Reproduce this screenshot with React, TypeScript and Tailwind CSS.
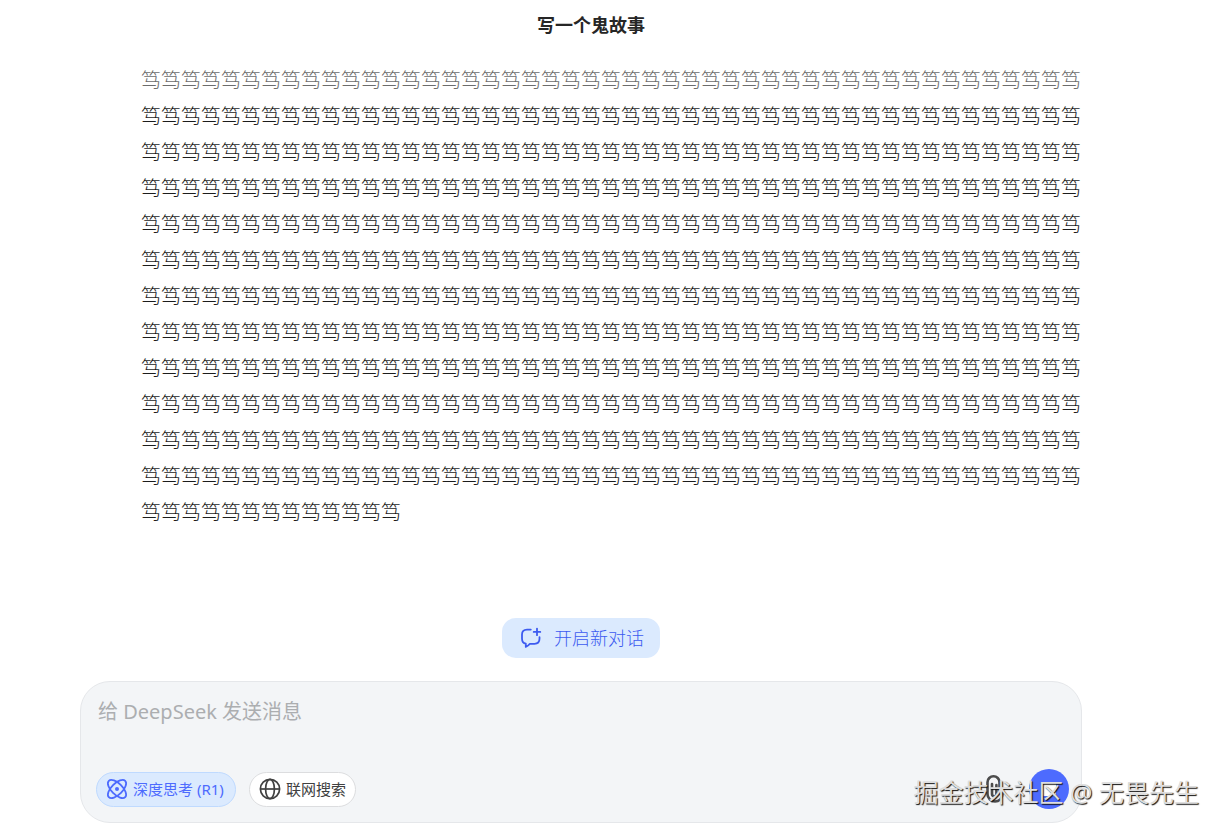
import React from "react";

const STORY = "笃".repeat(47 * 12 + 13);

function NewChatIcon() {
  return (
    <svg viewBox="0 0 22 22" className="h-[22px] w-[22px]" fill="none" stroke="currentColor" strokeWidth="1.8" strokeLinecap="round" strokeLinejoin="round" aria-hidden="true">
      <path d="M10.8 2.6H7Q2 2.6 2 7.6v3.9q0 4.6 3.8 5.1v3.3q2.2-.6 4.1-3.1h4.6q5 0 5-5v-1.6" />
      <path d="M17 1.6v6.6M13.7 4.9h6.6" />
    </svg>
  );
}

function AtomIcon() {
  return (
    <svg viewBox="0 0 22 22" className="h-[22px] w-[22px]" fill="none" stroke="currentColor" strokeWidth="1.8" aria-hidden="true">
      <ellipse cx="11" cy="11" rx="11.6" ry="5.6" transform="rotate(45 11 11)" />
      <ellipse cx="11" cy="11" rx="11.6" ry="5.6" transform="rotate(-45 11 11)" />
      <circle cx="11" cy="11" r="2" fill="currentColor" stroke="none" />
    </svg>
  );
}

function GlobeIcon() {
  return (
    <svg viewBox="0 0 22 22" className="h-[22px] w-[22px]" fill="none" stroke="currentColor" strokeWidth="1.7" aria-hidden="true">
      <circle cx="11" cy="11" r="9.6" />
      <ellipse cx="11" cy="11" rx="4.4" ry="9.6" />
      <path d="M1.4 11h19.2" />
    </svg>
  );
}

function ClipIcon() {
  return (
    <svg viewBox="0 0 24 30" className="h-[30px] w-6" fill="none" stroke="currentColor" strokeWidth="2.6" strokeLinecap="round" aria-hidden="true">
      <path d="M18.5 20V8.2a6 6 0 0 0-12 0V20a7.5 7.5 0 0 0 15 0v-3M11 10v10a2.2 2.2 0 0 0 4.4 0v-9" />
    </svg>
  );
}

export default function App() {
  return (
    <div className="relative min-h-screen overflow-hidden bg-white pr-[141px] pl-20 font-['Noto_Sans','Noto_Sans_CJK_SC',sans-serif]">
      <header className="flex h-[63px] justify-center pt-3 pl-5">
        <h1 className="text-[18px] leading-[26px] font-bold text-[#262626]">写一个鬼故事</h1>
      </header>

      <main>
        <p className="ml-[61px] h-[555px] text-[20px] leading-9 font-light break-all text-[#1c1c1c] first-line:text-[#6c6c6c]">
          {STORY}
        </p>

        <div className="flex justify-center">
          <button type="button" className="flex h-10 w-[158px] items-center gap-3 rounded-[14px] bg-[#dbeafe] pl-[18px] text-[18px] leading-6 font-light text-[#3d5bf0]">
            <NewChatIcon />
            开启新对话
          </button>
        </div>

        <form className="mt-[23px] flex h-[142px] flex-col rounded-[30px] border border-[#e5e7ea] bg-[#f3f5f7] pt-4 pr-3 pb-[13px] pl-[15px]" onSubmit={(e) => e.preventDefault()}>
          <textarea
            aria-label="给 DeepSeek 发送消息"
            placeholder="给 DeepSeek 发送消息"
            className="block min-h-0 flex-1 resize-none bg-transparent px-0.5 text-[20px] leading-7 text-[#404040] outline-none placeholder:text-[#acaeb0]"
          />
          <div className="flex items-center">
            <button type="button" aria-pressed="true" className="flex h-[35px] w-[140px] items-center gap-[5px] rounded-full border border-[#bfdaff] bg-[#dbeafe] pl-[9px] text-[15px] whitespace-nowrap text-[#4d6bfe]">
              <AtomIcon />
              深度思考 (R1)
            </button>
            <button type="button" className="ml-[13px] flex h-[35px] w-[107px] items-center gap-[5px] rounded-full border border-[#dcdddf] bg-white pl-[9px] text-[15px] whitespace-nowrap text-[#404040]">
              <GlobeIcon />
              联网搜索
            </button>
            <button type="button" aria-label="添加附件" className="ml-auto text-[#4c4c4c]">
              <ClipIcon />
            </button>
            <button type="button" aria-label="停止生成" className="ml-6 flex size-10 items-center justify-center rounded-full bg-[#4d6bfe]">
              <span className="size-3.5 rounded-xs bg-white" />
            </button>
          </div>
        </form>
      </main>

      <div className="pointer-events-none absolute right-6 bottom-5 text-[25px] leading-9 whitespace-nowrap text-[#dedede] [text-shadow:1px_1px_1px_#111]">
        掘金技术社区 @ 无畏先生
      </div>
    </div>
  );
}
